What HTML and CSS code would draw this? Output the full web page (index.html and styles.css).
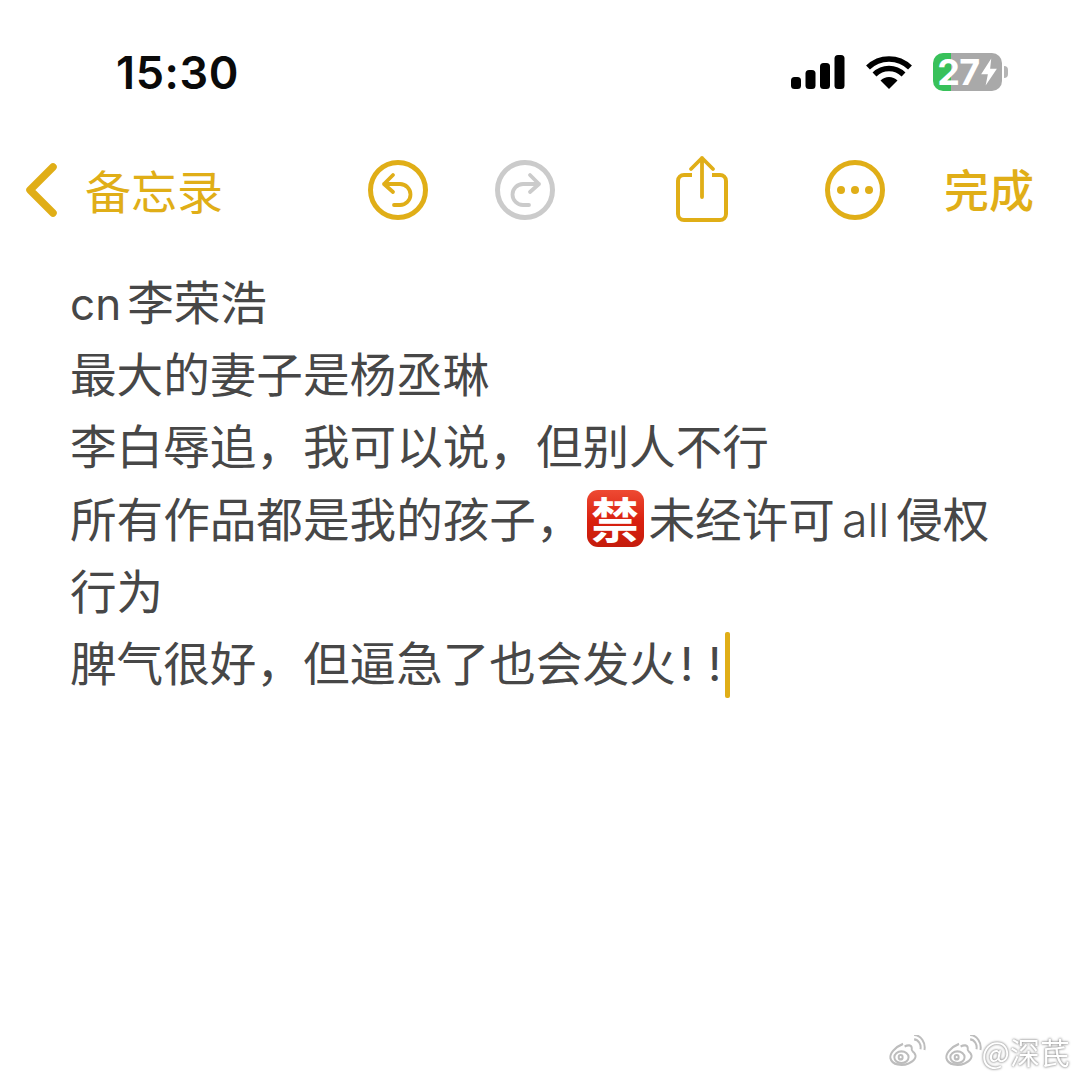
FILE: index.html
```html
<!DOCTYPE html>
<html lang="zh-CN">
<head>
<meta charset="utf-8">
<title>备忘录</title>
<link rel="stylesheet" href="styles.css">
</head>
<body>
<main class="screen">
  <header class="status">
    <div class="time">15:30</div>
    <div class="status-icons">
      <svg class="signal" width="54" height="34" viewBox="0 0 54 34"><rect x="0" y="22" width="10" height="12" rx="3.5"/><rect x="14.500" y="15" width="10" height="19" rx="3.500"/><rect x="29" y="8" width="10" height="26" rx="3.500"/><rect x="43.500" y="0" width="10" height="34" rx="3.500"/></svg>
      <svg class="wifi" width="46" height="34" viewBox="0 0 46 34"><path d="M23 34 L14.500 25.500 A12 12 0 0 1 31.500 25.500 Z" fill="#000"/><path d="M8.500 19.500 A20.500 20.500 0 0 1 37.500 19.500" fill="none" stroke="#000" stroke-width="5.500"/><path d="M2 12.500 A30 30 0 0 1 44 12.500" fill="none" stroke="#000" stroke-width="5.500"/></svg>
      <div class="battery"><div class="battery-body"><span class="battery-num">27</span><svg class="bolt" width="18" height="28" viewBox="0 0 16 24"><path d="M10 0 L1 14 H7 L5 24 L15 9 H9 Z" fill="#fff"/></svg></div><div class="battery-cap"></div></div>
    </div>
  </header>

  <nav class="toolbar">
    <svg class="back" width="34" height="54" viewBox="0 0 34 54"><path d="M28 4 L5 27 L28 50" fill="none" stroke="#e0ae17" stroke-width="7.500" stroke-linecap="round" stroke-linejoin="round"/></svg>
    <span class="back-label">备忘录</span>
    <svg class="tool undo" width="60" height="60" viewBox="0 0 60 60"><circle cx="30" cy="30" r="27.500" fill="none" stroke="#e0ae17" stroke-width="5"/><path d="M25 15 L16 24 L25 32 M16 24 H32 A10.500 10.500 0 0 1 32 45 H26" fill="none" stroke="#e0ae17" stroke-width="3.800" stroke-linecap="round" stroke-linejoin="round"/></svg>
    <svg class="tool redo" width="60" height="60" viewBox="0 0 60 60"><circle cx="30" cy="30" r="27.500" fill="none" stroke="#cbcbcb" stroke-width="5"/><path d="M35 15 L44 24 L35 32 M44 24 H28 A10.500 10.500 0 0 0 28 45 H34" fill="none" stroke="#cbcbcb" stroke-width="3.800" stroke-linecap="round" stroke-linejoin="round"/></svg>
    <svg class="tool share" width="54" height="68" viewBox="0 0 54 68"><path d="M17 20 H9 A6 6 0 0 0 3 26 V59 A6 6 0 0 0 9 65 H45 A6 6 0 0 0 51 59 V26 A6 6 0 0 0 45 20 H37" fill="none" stroke="#e0ae17" stroke-width="4"/><path d="M27 42 V3 M16 14 L27 3 L38 14" fill="none" stroke="#e0ae17" stroke-width="3.800" stroke-linecap="round" stroke-linejoin="round"/></svg>
    <svg class="tool more" width="60" height="60" viewBox="0 0 60 60"><circle cx="30" cy="30" r="27.500" fill="none" stroke="#e0ae17" stroke-width="5"/><circle cx="16" cy="30" r="4" fill="#e0ae17"/><circle cx="30" cy="30" r="4" fill="#e0ae17"/><circle cx="44" cy="30" r="4" fill="#e0ae17"/></svg>
    <span class="done">完成</span>
  </nav>

  <article class="note">
    <p class="line"><span class="latin first">cn</span>李荣浩</p>
    <p class="line">最大的妻子是杨丞琳</p>
    <p class="line">李白辱追，我可以说，但别人不行</p>
    <p class="line">所有作品都是我的孩子，<span class="emoji">禁</span>未经许可<span class="latin inline">all</span>侵权</p>
    <p class="line">行为</p>
    <p class="line">脾气很好，但逼急了也会发火<span class="bang">!</span><span class="bang">!</span><span class="caret"></span></p>
  </article>

  <div class="watermark">
    <svg class="weibo" width="38" height="32" viewBox="0 0 48 36" preserveAspectRatio="none"><g fill="none" stroke="#bdbdbd" stroke-width="2.500"><path d="M19 10 C8 14 2 21 3 26 C5 34 18 35 26 32 C34 29 37 24 33 20 C31 18 29 18 30 15 C30 11 25 11 21 13"/><ellipse cx="17" cy="25" rx="9" ry="6.500"/><circle cx="16" cy="25" r="2.500"/><path d="M33 5 A9 9 0 0 1 41 16 M33 0 A14 14 0 0 1 46 17"/></g></svg>
    <svg class="weibo second" width="38" height="32" viewBox="0 0 48 36" preserveAspectRatio="none"><g fill="none" stroke="#bdbdbd" stroke-width="2.500"><path d="M19 10 C8 14 2 21 3 26 C5 34 18 35 26 32 C34 29 37 24 33 20 C31 18 29 18 30 15 C30 11 25 11 21 13"/><ellipse cx="17" cy="25" rx="9" ry="6.500"/><circle cx="16" cy="25" r="2.500"/><path d="M33 5 A9 9 0 0 1 41 16 M33 0 A14 14 0 0 1 46 17"/></g></svg>
    <span class="mark-text">@深芪</span>
  </div>
</main>
</body>
</html>
```
FILE: styles.css
```css
* { box-sizing: border-box; }
html, body { margin: 0; padding: 0; background: #fff; }
.screen {
  position: relative;
  width: 1080px;
  height: 1080px;
  overflow: hidden;
  background: #fff;
  font-family: "Noto Sans CJK SC", "Noto Sans", sans-serif;
}
.status {
  display: flex;
  align-items: center;
  justify-content: space-between;
  height: 72px;
  margin-top: 36px;
  padding: 0 72px 0 116px;
}
.time {
  font-family: Inter, "Liberation Sans", sans-serif;
  font-size: 45px;
  font-weight: 600;
  letter-spacing: 0.6px;
  color: #0a0a0a;
}
.status-icons { display: flex; align-items: center; }
.signal { fill: #000; margin-right: 21px; }
.wifi { margin-right: 21px; }
.battery { display: flex; align-items: center; }
.battery-body {
  display: flex;
  align-items: center;
  justify-content: center;
  width: 69px;
  height: 38px;
  border-radius: 10px;
  background: linear-gradient(90deg, #38c15a 0 26%, #a9a9a9 26% 100%);
}
.battery-num {
  font-family: Inter, "Liberation Sans", sans-serif;
  font-size: 36px;
  font-weight: 700;
  line-height: 38px;
  letter-spacing: -0.5px;
  color: #fff;
}
.bolt { margin-left: 0; }
.battery-cap {
  width: 4px;
  height: 12px;
  margin-left: 2px;
  border-radius: 0 4px 4px 0;
  background: #b5b5b5;
}
.toolbar {
  display: flex;
  align-items: center;
  height: 70px;
  margin-top: 47px;
  padding-left: 25px;
}
.back-label {
  margin-left: 26px;
  margin-top: -3px;
  font-size: 46px;
  line-height: 70px;
  color: #e0ae17;
}
.tool { flex: none; }
.undo { margin-left: 145px; }
.redo { margin-left: 67px; }
.share { margin-left: 120px; margin-top: -2px; }
.more { margin-left: 96px; }
.done {
  margin-left: 59px;
  margin-top: -3px;
  font-size: 45px;
  font-weight: 500;
  line-height: 70px;
  color: #e0ae17;
}
.note {
  margin-top: 39px;
  padding-left: 70px;
  color: #474747;
  font-size: 46.600px;
  line-height: 72.200px;
}
.line { margin: 0; height: 72.200px; white-space: nowrap; }
.latin { font-family: Inter, "Liberation Sans", sans-serif; font-weight: 400; }
.latin.first { font-size: 44px; margin-right: 6px; }
.latin.inline { font-weight: 300; margin: 0 7px; }
.emoji {
  display: inline-block;
  width: 57px;
  height: 57px;
  margin: 0 5px 0 4px;
  border-radius: 11px;
  background: linear-gradient(180deg, #ee4a33 0%, #d9200f 55%, #c41c0c 100%);
  color: #fff;
  font-size: 48px;
  font-weight: 700;
  line-height: 55px;
  text-align: center;
  vertical-align: -1px;
}
.bang { display: inline-block; width: 28px; font-family: Inter, sans-serif; text-align: center; }
.bang:first-of-type { margin-left: -3px; }
.caret {
  display: inline-block;
  width: 5px;
  height: 66px;
  margin-left: -4px;
  border-radius: 2px;
  background: #e0ae17;
  vertical-align: -17px;
}
.watermark {
  position: absolute;
  right: 10px;
  bottom: 11px;
  display: flex;
  align-items: center;
  filter: blur(0.6px);
}
.weibo { margin-right: 18px; }
.weibo.second { margin-right: 0; }
.mark-text {
  font-size: 30px;
  line-height: 36px;
  color: #fff;
  text-shadow: 0 0 2px #888, 0 0 3px #999;
}
```
